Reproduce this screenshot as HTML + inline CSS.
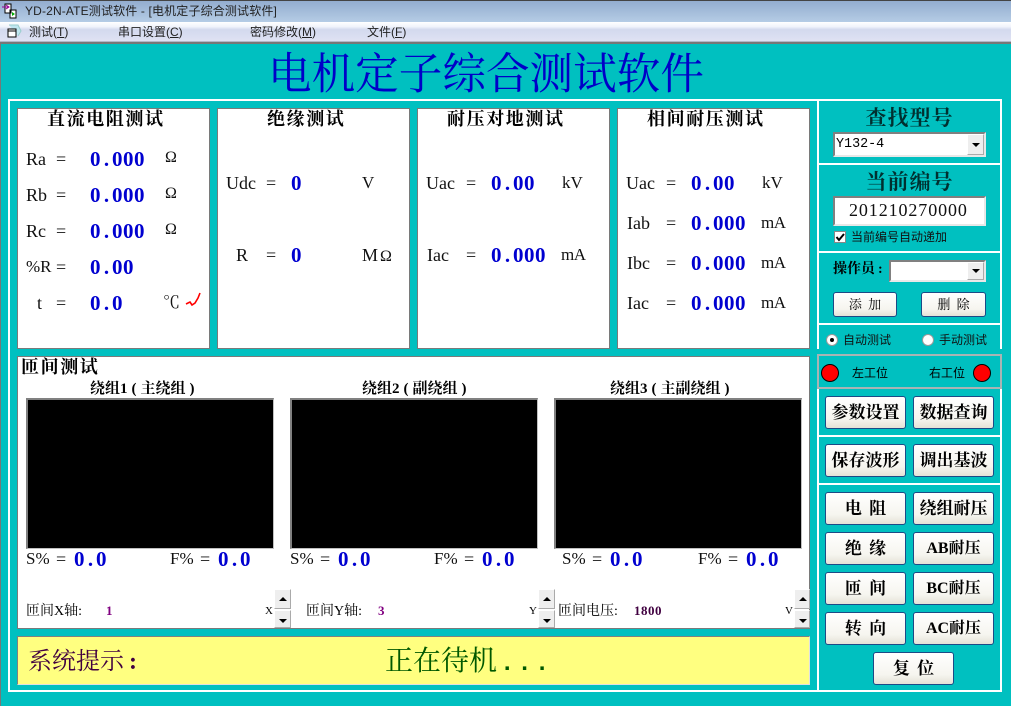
<!DOCTYPE html>
<html><head><meta charset="utf-8"><style>
html,body{margin:0;padding:0}
body{width:1011px;height:706px;position:relative;overflow:hidden;background:#00c0c0;font-family:"Liberation Serif","Noto Serif CJK SC",serif}
div,span.t{position:absolute;box-sizing:border-box}
.t{white-space:nowrap;line-height:20px;color:#000}
.w{background:#fff}
.p{background:#fff;border:1px solid #7a7a7a}
.l{font-size:18px;color:#111}
.u{font-size:17px;color:#111}
.v{font-family:"Liberation Serif",serif;font-weight:bold;font-size:21px;letter-spacing:.5px;color:#0000d0}
.d{display:inline-block;width:11px;letter-spacing:0;text-align:center}
.h{font-size:18px;font-weight:bold;letter-spacing:1.6px;color:#000}
.wl{font-size:15px;font-weight:bold;top:379px}
.pr{padding:0 4px}
.b{border:1px solid #1c4a86;border-radius:3px;background:linear-gradient(#fff,#f6f5ef 70%,#e4e2d6);text-align:center;font-weight:bold;font-size:17px;color:#000;word-spacing:3px;font-family:"Liberation Serif","Noto Serif CJK SC",serif;white-space:nowrap}
.s{background:#000;border:1px solid #c0c0c0;border-top:2px solid #808080;border-left:2px solid #808080}
.sb{background:#eee;border-top:1px solid #fff;border-left:1px solid #fff;border-right:1px solid #aaa;border-bottom:1px solid #aaa}
.up,.dn{width:0;height:0;border-left:4px solid transparent;border-right:4px solid transparent;left:4px}
.up{border-bottom:4px solid #000;top:7px}
.dn{border-top:4px solid #000;top:8px}
.c{background:#fff;border:2px solid #808080;border-right-color:#e8e8e8;border-bottom-color:#e8e8e8}
.m{font-family:"Liberation Sans","Noto Sans CJK SC",sans-serif;font-size:12px;color:#222}
.sm{font-family:"Liberation Sans","Noto Sans CJK SC",sans-serif;font-size:12px;color:#111}
.n{font-family:"Liberation Serif",serif;font-weight:bold;font-size:13px;letter-spacing:.5px}
.hh{font-size:21px;letter-spacing:1px;color:#003030;font-weight:700;text-align:center}
</style></head><body>
<!-- title bar -->
<div style="left:0;top:0;width:1011px;height:22px;background:linear-gradient(#93adcf,#b5cce5);border-top:1px solid #444"></div>
<div style="left:0;top:22px;width:1011px;height:19px;background:linear-gradient(#fff 0,#f0f3fb 25%,#d3d9ee 40%,#dfe2f3 100%)"></div>
<div style="left:0;top:41px;width:1011px;height:1px;background:#b4b6c8"></div>
<div style="left:0;top:42px;width:1011px;height:2px;background:#777"></div>
<div style="left:0;top:44px;width:1px;height:662px;background:#777"></div>
<svg style="position:absolute;left:1px;top:2px" width="17" height="17"><path d="M4 2h6v9H4zM9 8h6v8H9z" fill="#fff" stroke="#000"/><path d="M1 5h7M5 3l3 2-3 2" fill="none" stroke="#909"/><path d="M11 10l3 2-3 2z" fill="#0a0"/></svg>
<svg style="position:absolute;left:6px;top:24px" width="16" height="15"><path d="M3 1h9l3 6-3 5" fill="#bfe6f0" stroke="#9cc"/><path d="M2 5h8v8H2z" fill="#fff" stroke="#000"/><path d="M2 7h8" stroke="#000"/></svg>
<span class="t m" style="left:25px;top:1px;letter-spacing:.15px">YD-2N-ATE测试软件 - [电机定子综合测试软件]</span>
<span class="t m" style="left:29px;top:22px">测试(<u>T</u>)</span>
<span class="t m" style="left:118px;top:22px">串口设置(<u>C</u>)</span>
<span class="t m" style="left:250px;top:22px">密码修改(<u>M</u>)</span>
<span class="t m" style="left:367px;top:22px">文件(<u>F</u>)</span>
<!-- title -->
<span class="t" style="left:268px;top:55px;font-size:43.6px;line-height:40px;color:#0000c8">电机定子综合测试软件</span>
<!-- frame -->
<div class="w" style="left:8px;top:99px;width:994px;height:2px"></div>
<div class="w" style="left:8px;top:99px;width:2px;height:593px"></div>
<div class="w" style="left:8px;top:690px;width:994px;height:2px"></div>
<div class="w" style="left:817px;top:99px;width:2px;height:250px"></div>
<div class="w" style="left:817px;top:389px;width:2px;height:303px"></div>
<div class="w" style="left:1000px;top:99px;width:2px;height:250px"></div>
<div class="w" style="left:1000px;top:389px;width:2px;height:303px"></div>
<div class="w" style="left:817px;top:163px;width:185px;height:2px"></div>
<div class="w" style="left:817px;top:251px;width:185px;height:2px"></div>
<div class="w" style="left:817px;top:323px;width:185px;height:2px"></div>
<div class="w" style="left:817px;top:435px;width:185px;height:2px"></div>
<div class="w" style="left:817px;top:483px;width:185px;height:2px"></div>
<!-- panels -->
<div class="p" style="left:17px;top:108px;width:193px;height:241px"></div>
<div class="p" style="left:217px;top:108px;width:193px;height:241px"></div>
<div class="p" style="left:417px;top:108px;width:193px;height:241px"></div>
<div class="p" style="left:617px;top:108px;width:193px;height:241px"></div>
<span class="t h" style="left:47px;top:109px">直流电阻测试</span>
<span class="t h" style="left:267px;top:109px">绝缘测试</span>
<span class="t h" style="left:447px;top:109px">耐压对地测试</span>
<span class="t h" style="left:647px;top:109px">相间耐压测试</span>
<!-- panel1 -->
<span class="t l" style="left:26px;top:149px">Ra</span><span class="t l" style="left:56px;top:149px">=</span><span class="t v" style="left:90px;top:149px">0<span class="d">.</span>000</span><span class="t l" style="left:165px;top:148px;font-size:16px">Ω</span>
<span class="t l" style="left:26px;top:185px">Rb</span><span class="t l" style="left:56px;top:185px">=</span><span class="t v" style="left:90px;top:185px">0<span class="d">.</span>000</span><span class="t l" style="left:165px;top:184px;font-size:16px">Ω</span>
<span class="t l" style="left:26px;top:221px">Rc</span><span class="t l" style="left:56px;top:221px">=</span><span class="t v" style="left:90px;top:221px">0<span class="d">.</span>000</span><span class="t l" style="left:165px;top:220px;font-size:16px">Ω</span>
<span class="t l" style="left:26px;top:257px;font-size:17px">%R</span><span class="t l" style="left:56px;top:257px">=</span><span class="t v" style="left:90px;top:257px">0<span class="d">.</span>00</span>
<span class="t l" style="left:37px;top:293px">t</span><span class="t l" style="left:56px;top:293px">=</span><span class="t v" style="left:90px;top:293px">0<span class="d">.</span>0</span><span class="t l" style="left:163px;top:293px;font-size:17px">℃</span>
<svg style="position:absolute;left:185px;top:291px" width="17" height="17"><path d="M1 13l4-2 2 3 3-2 3-5 2-5" fill="none" stroke="#f00" stroke-width="1.6"/></svg>
<!-- panel2 -->
<span class="t l" style="left:226px;top:173px">Udc</span><span class="t l" style="left:266px;top:173px">=</span><span class="t v" style="left:291px;top:173px">0</span><span class="t u" style="left:362px;top:173px">V</span>
<span class="t l" style="left:236px;top:245px">R</span><span class="t l" style="left:266px;top:245px">=</span><span class="t v" style="left:291px;top:245px">0</span><span class="t l" style="left:362px;top:245px;letter-spacing:-1px">M<span style="font-size:16px"> Ω</span></span>
<!-- panel3 -->
<span class="t l" style="left:426px;top:173px">Uac</span><span class="t l" style="left:466px;top:173px">=</span><span class="t v" style="left:491px;top:173px">0<span class="d">.</span>00</span><span class="t u" style="left:562px;top:173px">kV</span>
<span class="t l" style="left:427px;top:245px">Iac</span><span class="t l" style="left:466px;top:245px">=</span><span class="t v" style="left:491px;top:245px">0<span class="d">.</span>000</span><span class="t u" style="left:561px;top:245px;letter-spacing:-.5px">mA</span>
<!-- panel4 -->
<span class="t l" style="left:626px;top:173px">Uac</span><span class="t l" style="left:666px;top:173px">=</span><span class="t v" style="left:691px;top:173px">0<span class="d">.</span>00</span><span class="t u" style="left:762px;top:173px">kV</span>
<span class="t l" style="left:627px;top:213px">Iab</span><span class="t l" style="left:666px;top:213px">=</span><span class="t v" style="left:691px;top:213px">0<span class="d">.</span>000</span><span class="t u" style="left:761px;top:213px;letter-spacing:-.5px">mA</span>
<span class="t l" style="left:627px;top:253px">Ibc</span><span class="t l" style="left:666px;top:253px">=</span><span class="t v" style="left:691px;top:253px">0<span class="d">.</span>000</span><span class="t u" style="left:761px;top:253px;letter-spacing:-.5px">mA</span>
<span class="t l" style="left:627px;top:293px">Iac</span><span class="t l" style="left:666px;top:293px">=</span><span class="t v" style="left:691px;top:293px">0<span class="d">.</span>000</span><span class="t u" style="left:761px;top:293px;letter-spacing:-.5px">mA</span>
<!-- lower panel -->
<div class="p" style="left:17px;top:356px;width:793px;height:273px"></div>
<span class="t h" style="left:21px;top:357px">匝间测试</span>
<span class="t wl" style="left:90px">绕组1<span class="pr">(</span>主绕组<span class="pr">)</span></span>
<span class="t wl" style="left:362px">绕组2<span class="pr">(</span>副绕组<span class="pr">)</span></span>
<span class="t wl" style="left:610px">绕组3<span class="pr">(</span>主副绕组<span class="pr">)</span></span>
<div class="s" style="left:26px;top:398px;width:248px;height:151px"></div>
<div class="s" style="left:290px;top:398px;width:248px;height:151px"></div>
<div class="s" style="left:554px;top:398px;width:248px;height:151px"></div>
<span class="t l" style="left:26px;top:549px;font-size:17px">S%</span><span class="t l" style="left:56px;top:549px">=</span><span class="t v" style="left:74px;top:549px">0<span class="d">.</span>0</span>
<span class="t l" style="left:170px;top:549px;font-size:17px">F%</span><span class="t l" style="left:200px;top:549px">=</span><span class="t v" style="left:218px;top:549px">0<span class="d">.</span>0</span>
<span class="t l" style="left:290px;top:549px;font-size:17px">S%</span><span class="t l" style="left:320px;top:549px">=</span><span class="t v" style="left:338px;top:549px">0<span class="d">.</span>0</span>
<span class="t l" style="left:434px;top:549px;font-size:17px">F%</span><span class="t l" style="left:464px;top:549px">=</span><span class="t v" style="left:482px;top:549px">0<span class="d">.</span>0</span>
<span class="t l" style="left:562px;top:549px;font-size:17px">S%</span><span class="t l" style="left:592px;top:549px">=</span><span class="t v" style="left:610px;top:549px">0<span class="d">.</span>0</span>
<span class="t l" style="left:698px;top:549px;font-size:17px">F%</span><span class="t l" style="left:728px;top:549px">=</span><span class="t v" style="left:746px;top:549px">0<span class="d">.</span>0</span>
<span class="t" style="left:26px;top:602px;font-size:14px">匝间X轴:</span><span class="t n" style="left:106px;top:601px;color:#800080">1</span><span class="t" style="left:265px;top:601px;font-size:11px">X</span>
<span class="t" style="left:306px;top:602px;font-size:14px">匝间Y轴:</span><span class="t n" style="left:378px;top:601px;color:#800080">3</span><span class="t" style="left:529px;top:601px;font-size:11px">Y</span>
<span class="t" style="left:558px;top:602px;font-size:14px">匝间电压:</span><span class="t n" style="left:634px;top:601px;color:#400040">1800</span><span class="t" style="left:785px;top:601px;font-size:11px">V</span>
<div class="sb" style="left:274px;top:589px;width:17px;height:20px"><div class="up"></div></div>
<div class="sb" style="left:274px;top:610px;width:17px;height:18px"><div class="dn"></div></div>
<div class="sb" style="left:538px;top:589px;width:17px;height:20px"><div class="up"></div></div>
<div class="sb" style="left:538px;top:610px;width:17px;height:18px"><div class="dn"></div></div>
<div class="sb" style="left:794px;top:589px;width:16px;height:20px"><div class="up"></div></div>
<div class="sb" style="left:794px;top:610px;width:16px;height:18px"><div class="dn"></div></div>
<!-- yellow -->
<div style="left:17px;top:636px;width:793px;height:49px;background:#ffff80;border:1px solid #808080;border-right-color:#e0e0e0;border-bottom-color:#e0e0e0"></div>
<span class="t" style="left:28px;top:652px;font-size:24px;color:#400040">系统提示<b style="padding-left:5px">:</b></span>
<span class="t" style="left:385px;top:652px;font-size:28px;color:#005800">正在待机<span style="margin-left:3px;letter-spacing:3px;font-family:'Liberation Mono',monospace;font-weight:bold;font-size:24px">...</span></span>
<!-- right column -->
<span class="t hh" style="left:817px;width:185px;top:108px">查找型号</span>
<div class="c" style="left:833px;top:132px;width:153px;height:25px"></div>
<span class="t" style="left:836px;top:135px;font-size:13.4px;font-family:'Liberation Mono',monospace">Y132-4</span>
<div class="sb" style="left:967px;top:134px;width:17px;height:21px;background:#eee"><div style="left:4px;top:8px;width:0;height:0;border-left:4px solid transparent;border-right:4px solid transparent;border-top:4px solid #000"></div></div>
<span class="t hh" style="left:817px;width:185px;top:172px">当前编号</span>
<div class="c" style="left:833px;top:196px;width:153px;height:30px"></div>
<span class="t" style="left:849px;top:200px;font-size:18px;letter-spacing:.9px;color:#111">201210270000</span>
<div style="left:834px;top:231px;width:12px;height:12px;background:#fff;border:1px solid #888"></div>
<svg style="position:absolute;left:834px;top:231px" width="12" height="12"><path d="M2.5 6l2.5 3 5-6" fill="none" stroke="#000" stroke-width="2"/></svg>
<span class="t sm" style="left:851px;top:227px">当前编号自动递加</span>
<span class="t" style="left:833px;top:260px;font-size:14px;font-weight:bold">操作员<span style="padding-left:3px">:</span></span>
<div class="c" style="left:889px;top:260px;width:97px;height:22px"></div>
<div class="sb" style="left:967px;top:262px;width:17px;height:18px"><div style="left:4px;top:6px;width:0;height:0;border-left:4px solid transparent;border-right:4px solid transparent;border-top:4px solid #000"></div></div>
<div class="b" style="left:833px;top:292px;width:64px;height:25px;font-size:13px;font-weight:normal;line-height:23px">添 加</div>
<div class="b" style="left:921px;top:292px;width:65px;height:25px;font-size:13px;font-weight:normal;line-height:23px">删 除</div>
<div style="left:826px;top:334px;width:12px;height:12px;border-radius:50%;background:#fff;border:1px solid #999"></div>
<div style="left:830px;top:338px;width:4px;height:4px;border-radius:50%;background:#000"></div>
<span class="t sm" style="left:843px;top:330px">自动测试</span>
<div style="left:922px;top:334px;width:12px;height:12px;border-radius:50%;background:#fff;border:1px solid #999"></div>
<span class="t sm" style="left:939px;top:330px">手动测试</span>
<div style="left:817px;top:354px;width:185px;height:35px;border:2px solid #a9b4b4"></div>
<div style="left:821px;top:364px;width:18px;height:18px;border-radius:50%;background:#f00;border:1px solid #000"></div>
<div style="left:973px;top:364px;width:18px;height:18px;border-radius:50%;background:#f00;border:1px solid #000"></div>
<span class="t" style="left:852px;top:363px;font-size:12px;font-family:'Liberation Sans','Noto Sans CJK SC',sans-serif">左工位</span>
<span class="t" style="left:929px;top:363px;font-size:12px;font-family:'Liberation Sans','Noto Sans CJK SC',sans-serif">右工位</span>
<div class="b" style="left:825px;top:396px;width:81px;height:33px;line-height:31px">参数设置</div>
<div class="b" style="left:913px;top:396px;width:81px;height:33px;line-height:31px">数据查询</div>
<div class="b" style="left:825px;top:444px;width:81px;height:33px;line-height:31px">保存波形</div>
<div class="b" style="left:913px;top:444px;width:81px;height:33px;line-height:31px">调出基波</div>
<div class="b" style="left:825px;top:492px;width:81px;height:33px;line-height:31px">电 阻</div>
<div class="b" style="left:913px;top:492px;width:81px;height:33px;line-height:31px">绕组耐压</div>
<div class="b" style="left:825px;top:532px;width:81px;height:33px;line-height:31px">绝 缘</div>
<div class="b" style="left:913px;top:532px;width:81px;height:33px;line-height:31px;font-size:16px">AB耐压</div>
<div class="b" style="left:825px;top:572px;width:81px;height:33px;line-height:31px">匝 间</div>
<div class="b" style="left:913px;top:572px;width:81px;height:33px;line-height:31px;font-size:16px">BC耐压</div>
<div class="b" style="left:825px;top:612px;width:81px;height:33px;line-height:31px">转 向</div>
<div class="b" style="left:913px;top:612px;width:81px;height:33px;line-height:31px;font-size:16px">AC耐压</div>
<div class="b" style="left:873px;top:652px;width:81px;height:33px;line-height:31px">复 位</div>
</body></html>
